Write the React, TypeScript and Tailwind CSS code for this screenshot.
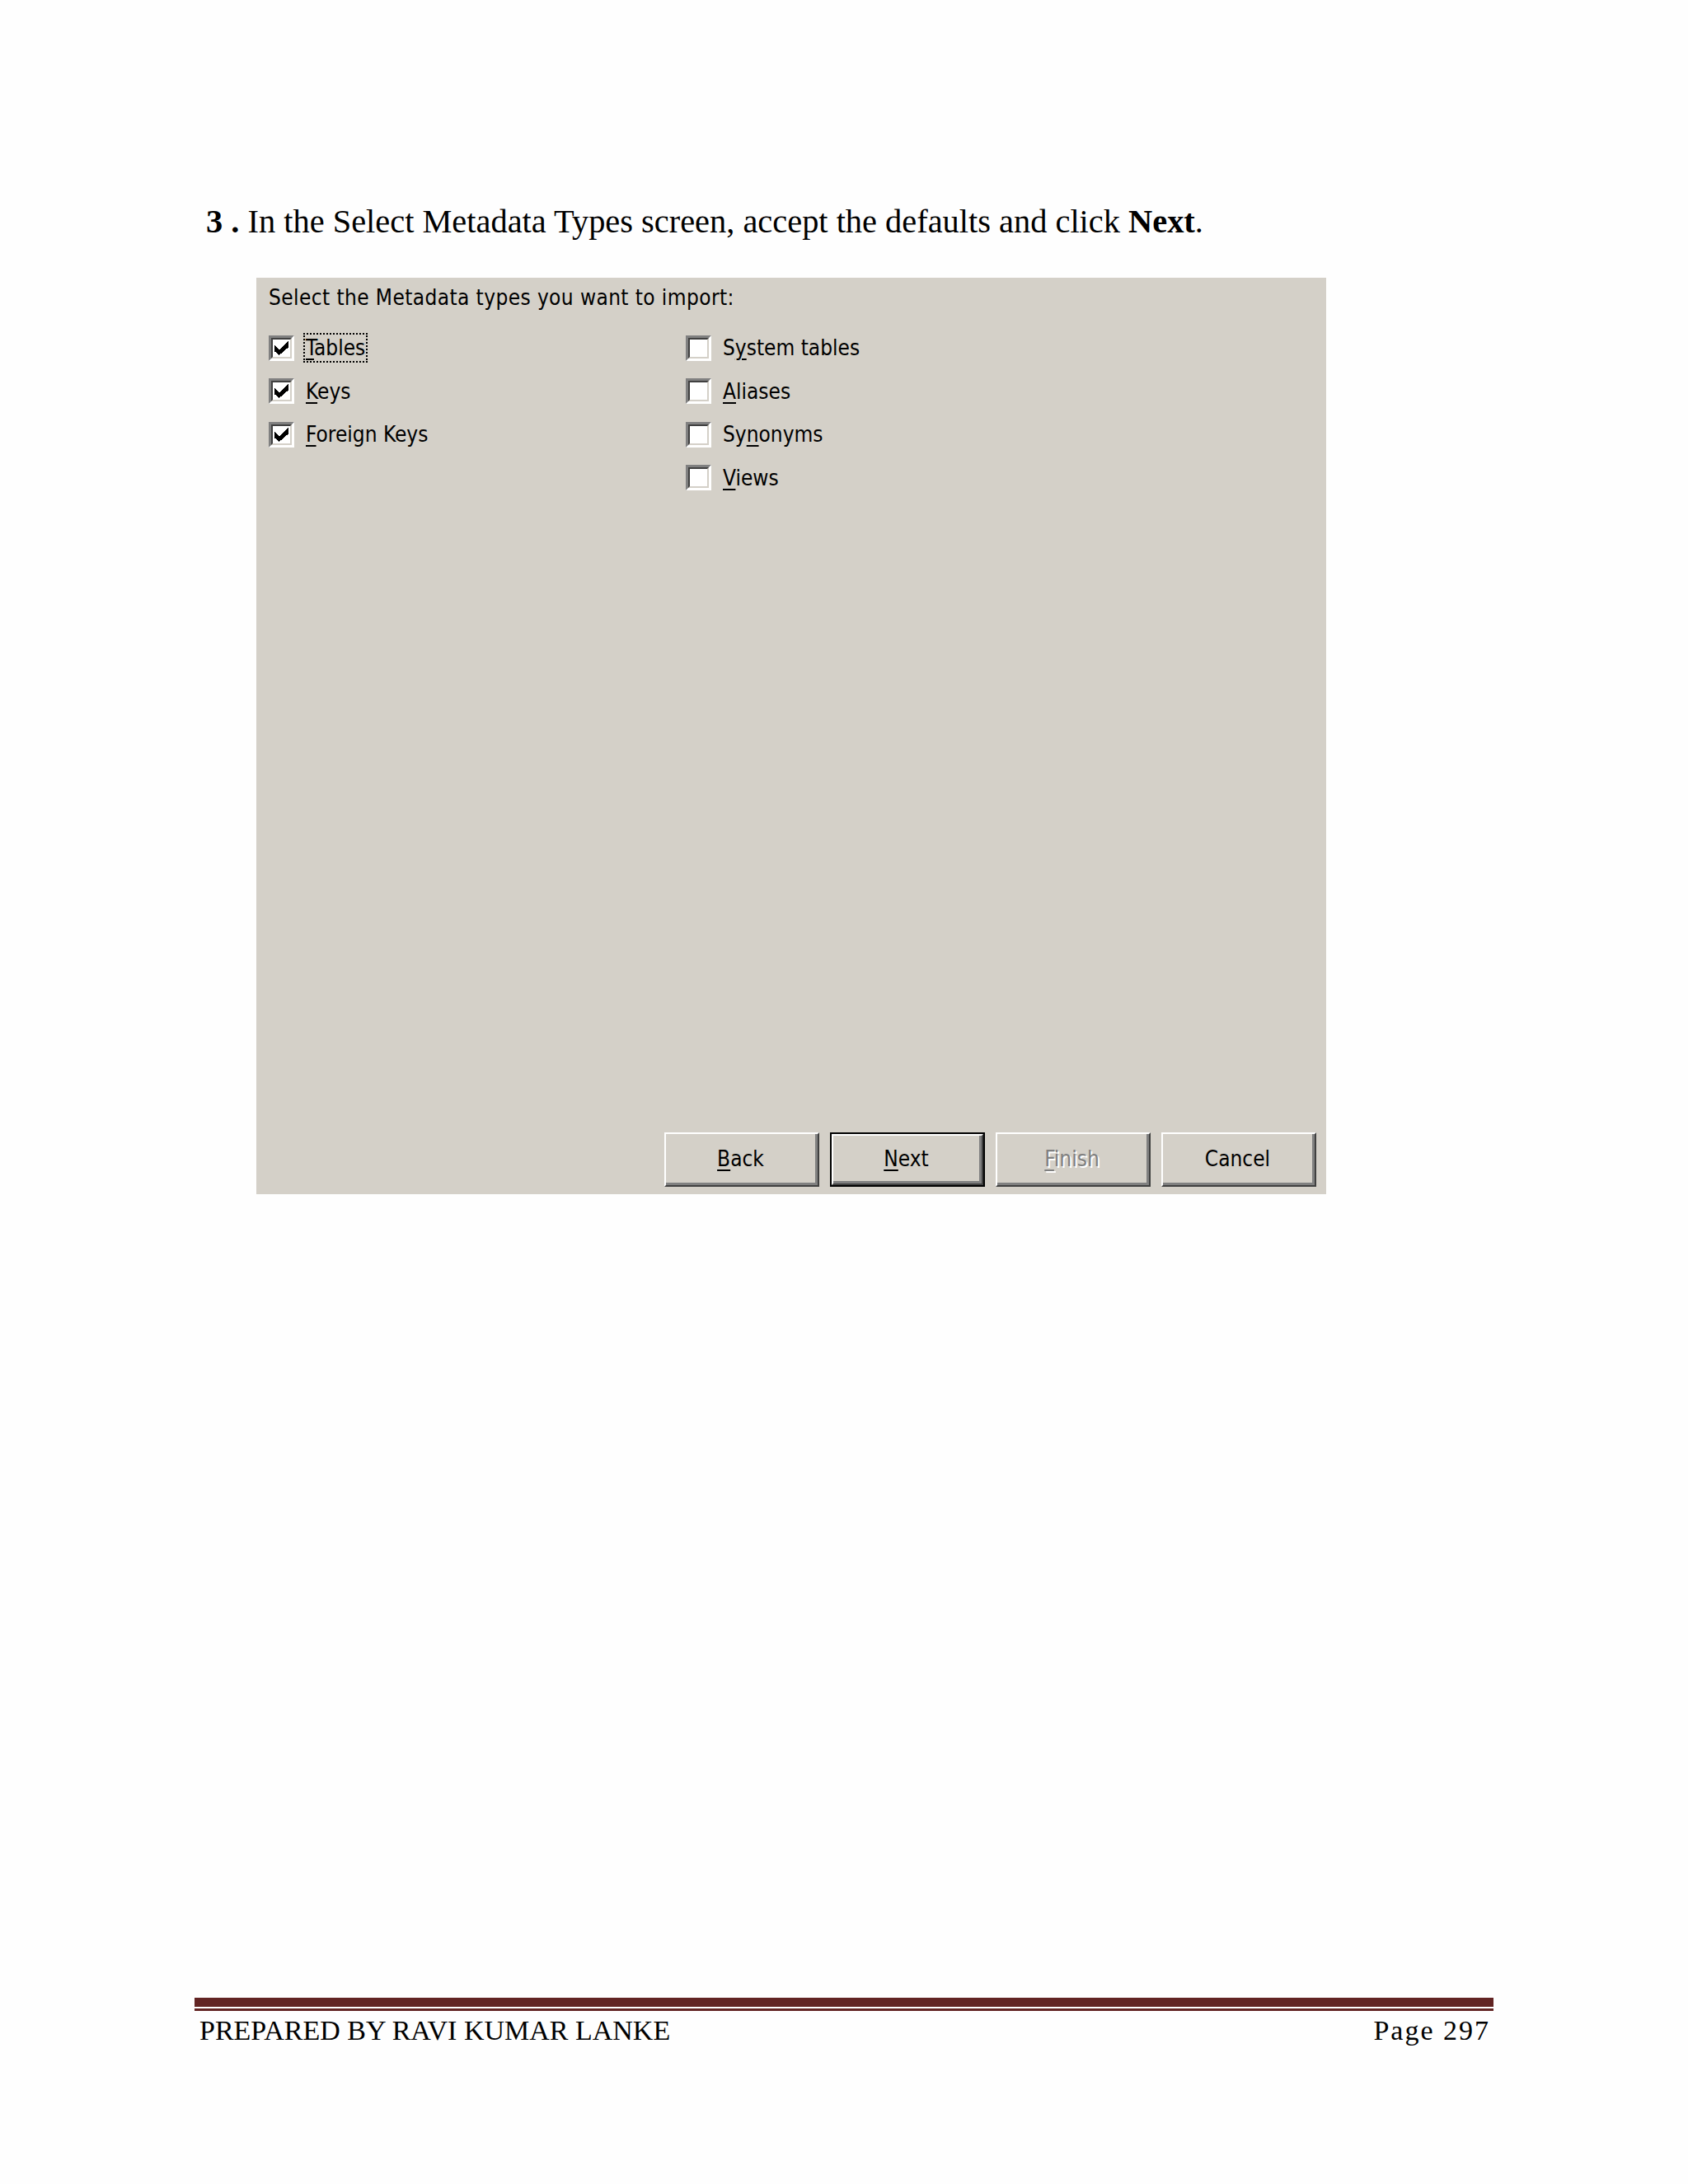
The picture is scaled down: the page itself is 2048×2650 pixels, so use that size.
import type { ReactNode } from "react";

const UI = { fontFamily: '"DejaVu Sans Condensed", "Liberation Sans", sans-serif' };

function CheckBox({ checked }: { checked: boolean }) {
  return (
    <span className="flex h-[31px] w-[31px] shrink-0 border-[3px] border-t-[#808080] border-l-[#808080] border-b-white border-r-white">
      <span className="flex h-full w-full items-center justify-center border-[2px] border-t-[#404040] border-l-[#404040] border-b-[#d4d0c8] border-r-[#d4d0c8] bg-white">
        {checked && (
          <svg width="17" height="17" viewBox="0 0 7 7" shapeRendering="crispEdges">
            <polygon points="0,2 2.3,4.3 7,0 7,3 2.3,7 0,5" fill="#000" />
          </svg>
        )}
      </span>
    </span>
  );
}

function Option({ checked, label, focused }: { checked: boolean; label: ReactNode; focused?: boolean }) {
  return (
    <div className="flex h-[52.5px] items-center">
      <CheckBox checked={checked} />
      <span
        className={
          "ml-[11px] border-2 border-dotted px-[1px] text-[26px] leading-[32px] text-black " +
          (focused ? "border-black" : "border-transparent")
        }
      >
        {label}
      </span>
    </div>
  );
}

const Mn = ({ children }: { children: ReactNode }) => (
  <u className="decoration-[2px] underline-offset-[4px]">{children}</u>
);

function Button({ children, primary, disabled }: { children: ReactNode; primary?: boolean; disabled?: boolean }) {
  const face = (
    <div className="flex h-full w-full border-[2px] border-t-white border-l-white border-b-[#404040] border-r-[#404040]">
      <div className="flex h-full w-full items-center justify-center border-b-[3px] border-r-[3px] border-[#808080] bg-[#d4d0c8]">
        <span
          className={
            "text-[26px] leading-[30px] " +
            (disabled ? "text-[#808080] [text-shadow:2px_2px_0_#ffffff]" : "text-black")
          }
        >
          {children}
        </span>
      </div>
    </div>
  );
  return (
    <div className={"h-[66px] w-[188px] " + (primary ? "border-2 border-black" : "")}>{face}</div>
  );
}

export default function App() {
  return (
    <div className="flex h-[2650px] w-[2048px] flex-col bg-[#fefefe]">
      <p className="pl-[250px] pt-[246px] text-[40.4px] leading-[46px] text-black" style={{ fontFamily: '"Liberation Serif", serif' }}>
        <b>3 .</b> In the Select Metadata Types screen, accept the defaults and click <b>Next</b>.
      </p>

      <div className="ml-[311px] mt-[45px] flex h-[1112px] w-[1298px] flex-col bg-[#d4d0c8] pb-[9px] pl-[15px] pr-[12px] pt-[9px]" style={UI}>
        <p className="text-[26px] leading-[30px] tracking-[0.4px] text-black">Select the Metadata types you want to import:</p>

        <div className="mt-[20px] grid grid-cols-[506px_1fr]">
          <div className="flex flex-col">
            <Option checked focused label={<><Mn>T</Mn>ables</>} />
            <Option checked label={<><Mn>K</Mn>eys</>} />
            <Option checked label={<><Mn>F</Mn>oreign Keys</>} />
          </div>
          <div className="flex flex-col">
            <Option checked={false} label={<>S<Mn>y</Mn>stem tables</>} />
            <Option checked={false} label={<><Mn>A</Mn>liases</>} />
            <Option checked={false} label={<>Sy<Mn>n</Mn>onyms</>} />
            <Option checked={false} label={<><Mn>V</Mn>iews</>} />
          </div>
        </div>

        <div className="mt-auto flex justify-end gap-[13px]">
          <Button><Mn>B</Mn>ack</Button>
          <Button primary><Mn>N</Mn>ext</Button>
          <Button disabled><Mn>F</Mn>inish</Button>
          <Button>Cancel</Button>
        </div>
      </div>

      <div className="ml-[236px] mt-auto w-[1576px] pb-[166px]" style={{ fontFamily: '"Liberation Serif", serif' }}>
        <div className="h-[11px] bg-[#622423]" />
        <div className="mt-[2px] h-[3px] bg-[#622423]" />
        <div className="mt-[4px] flex justify-between pl-[6px] pr-[4px] text-[34px] leading-[40px] text-black">
          <span>PREPARED BY RAVI KUMAR LANKE</span>
          <span className="tracking-[2px]">Page 297</span>
        </div>
      </div>
    </div>
  );
}
